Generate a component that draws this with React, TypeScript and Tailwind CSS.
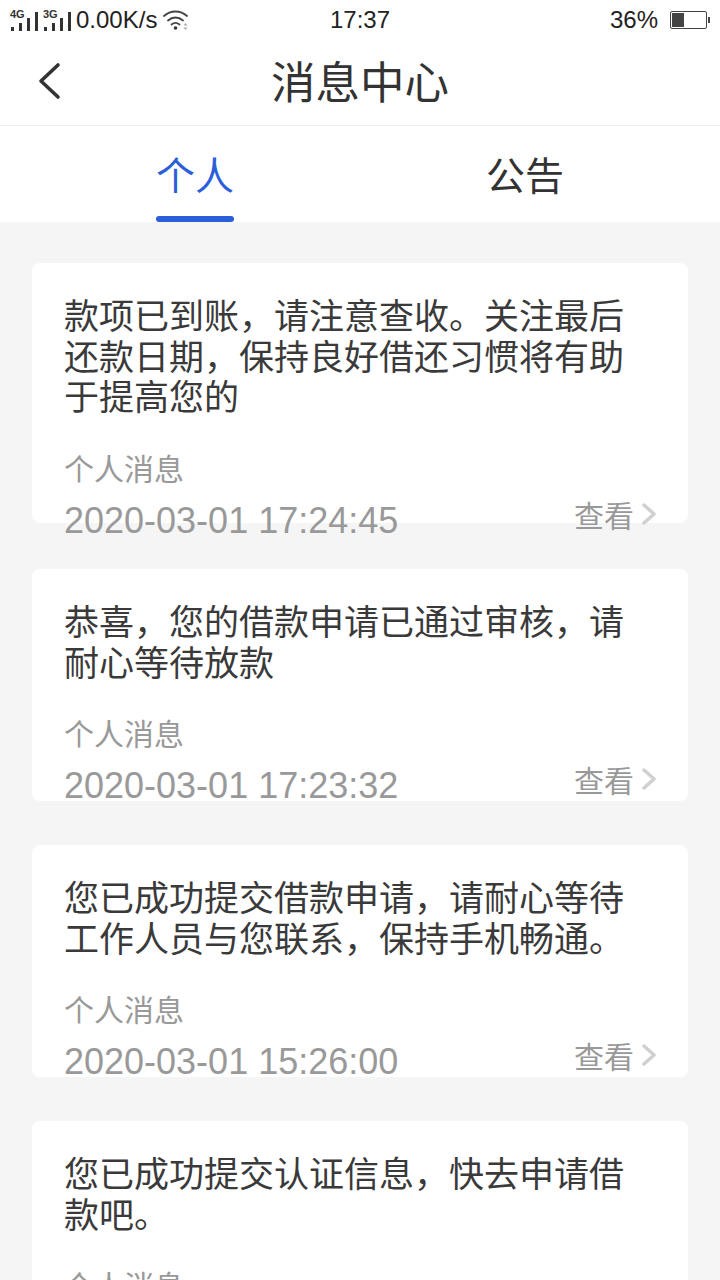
const font = '[font-family:"Noto_Sans_CJK_SC",sans-serif]';

const messages = [
  { text: '款项已到账，请注意查收。关注最后还款日期，保持良好借还习惯将有助于提高您的', time: '2020-03-01 17:24:45', h: 'h-[260px] mb-[46px]' },
  { text: '恭喜，您的借款申请已通过审核，请耐心等待放款', time: '2020-03-01 17:23:32', h: 'h-[232px] mb-[44px]' },
  { text: '您已成功提交借款申请，请耐心等待工作人员与您联系，保持手机畅通。', time: '2020-03-01 15:26:00', h: 'h-[232px] mb-[44px]' },
  { text: '您已成功提交认证信息，快去申请借款吧。', time: '2020-03-01 15:20:11', h: 'h-[232px]' },
];

function Signal({ label }: { label: string }) {
  return (
    <div className="relative h-[24px] w-[30px]">
      <span className="absolute left-0 top-0 text-[11px] leading-[12px] font-bold text-[#333] [font-family:'Liberation_Sans',sans-serif]">{label}</span>
      <svg width="30" height="24" viewBox="0 0 30 24" className="absolute left-0 top-0">
        <rect x="1" y="19" width="3" height="4" fill="#333" />
        <rect x="9" y="15" width="3" height="8" fill="#333" />
        <rect x="17" y="10" width="3" height="13" fill="#333" />
        <rect x="25" y="4" width="3" height="19" fill="#333" />
      </svg>
    </div>
  );
}

function Wifi() {
  return (
    <svg width="26" height="22" viewBox="0 0 26 22" fill="none" stroke="#444" strokeWidth="1.8" strokeLinecap="round">
      <path d="M1 7C7.5 1 17.5 1 24 7" />
      <path d="M5 11.500C9.500 7.500 15.500 7.500 20 11.500" />
      <path d="M8.500 15.500C11 13.500 14 13.500 16.500 15.500" />
      <circle cx="12.500" cy="19" r="1.800" fill="#333" stroke="none" />
      <path d="M20.500 16.500h4l-2-2.500zM20.500 18.500h4l-2 2.500z" fill="#aaa" stroke="none" />
    </svg>
  );
}

function StatusBar() {
  return (
    <div className="grid h-[40px] shrink-0 grid-cols-3 items-center bg-white px-[10px] text-[#222] [font-family:'Liberation_Sans',sans-serif]">
      <div className="flex items-center">
        <Signal label="4G" />
        <div className="ml-[3px]"><Signal label="3G" /></div>
        <span className="ml-[3px] whitespace-nowrap text-[24px] leading-[30px]">0.00K/s</span>
        <div className="ml-[6px]"><Wifi /></div>
      </div>
      <div className="text-center text-[24px] leading-[30px]">17:37</div>
      <div className="flex items-center justify-end">
        <span className="text-[24px] leading-[30px]">36%</span>
        <div className="ml-[12px] flex items-center">
          <div className="h-[18px] w-[37px] rounded-[2px] border border-[#444] p-[1px]">
            <div className="h-full w-[12px] bg-[#444]" />
          </div>
          <div className="ml-[1px] h-[6px] w-[2px] bg-[#444]" />
        </div>
      </div>
    </div>
  );
}

function Header() {
  return (
    <div className="relative flex h-[86px] shrink-0 items-center justify-center border-b border-[#eeeeee] bg-white pb-[5px]">
      <svg width="24" height="38" viewBox="0 0 24 38" fill="none" className="absolute left-[38px] top-[22px]">
        <path d="M20 3L3 19L20 35" stroke="#333" strokeWidth="3.600" strokeLinecap="round" strokeLinejoin="round" />
      </svg>
      <h1 className={`text-[44.500px] leading-[60px] font-normal text-[#333] ${font}`}>消息中心</h1>
    </div>
  );
}

function Tabs() {
  return (
    <div className={`grid h-[96px] shrink-0 grid-cols-2 bg-white px-[30px] text-[39px] ${font}`}>
      <div className="flex flex-col items-center justify-between">
        <span className="pt-[19px] leading-[56px] text-[#2b5fd9]">个人</span>
        <div className="h-[6px] w-[78px] rounded-full bg-[#2b5fd9]" />
      </div>
      <div className="flex flex-col items-center">
        <span className="pt-[19px] leading-[56px] text-[#333]">公告</span>
      </div>
    </div>
  );
}

function MessageCard({ text, time, h }: { text: string; time: string; h: string }) {
  return (
    <div className={`${h} shrink-0 rounded-[8px] bg-white pl-[32px] pr-[32px] pt-[31px]`}>
      <p className={`text-[35px] leading-[40.500px] text-[#3a3a3a] ${font}`}>{text}</p>
      <p className={`mt-[29px] text-[30px] leading-[44px] text-[#999] ${font}`}>个人消息</p>
      <div className="mt-[10px] flex items-start justify-between">
        <span className="whitespace-nowrap text-[36px] leading-[44px] text-[#999] [font-family:'Liberation_Sans',sans-serif]">{time}</span>
        <div className="-mt-[7px] flex items-center">
          <span className={`text-[30px] leading-[44px] text-[#999] ${font}`}>查看</span>
          <svg width="16" height="22" viewBox="0 0 16 22" fill="none" className="ml-[6px]">
            <path d="M4 2L14 11L4 20" stroke="#d0d0d0" strokeWidth="3.500" strokeLinecap="round" strokeLinejoin="round" />
          </svg>
        </div>
      </div>
    </div>
  );
}

export default function App() {
  return (
    <div className="flex h-[1280px] w-[720px] flex-col overflow-hidden bg-[#f5f5f5]">
      <StatusBar />
      <Header />
      <Tabs />
      <div className="flex flex-col pl-[32px] pr-[32px] pt-[41px]">
        {messages.map((m) => (
          <MessageCard key={m.time} text={m.text} time={m.time} h={m.h} />
        ))}
      </div>
    </div>
  );
}
